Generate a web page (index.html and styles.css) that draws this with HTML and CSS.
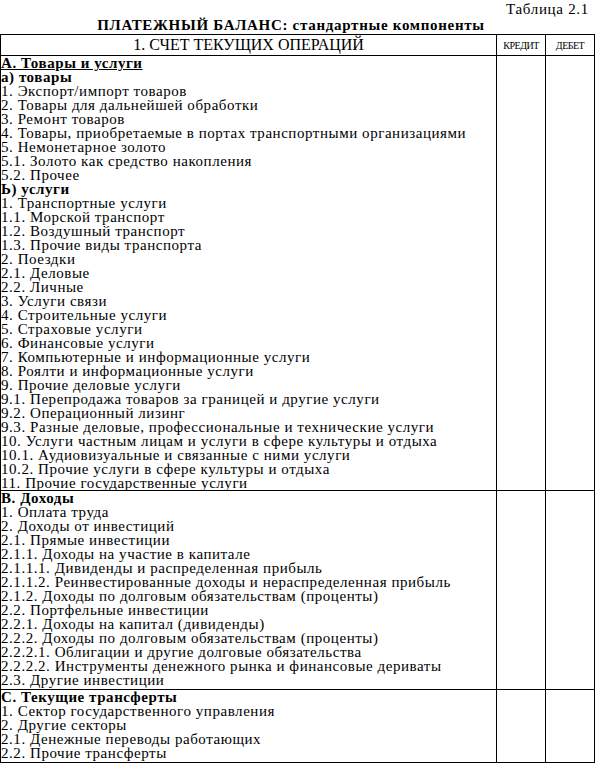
FILE: index.html
```html
<!DOCTYPE html>
<html lang="ru">
<head>
    <meta charset="UTF-8">
    <title>Платежный баланс</title>
    <link rel="stylesheet" href="styles.css">
</head>
<body>
    <div class="caption">Таблица 2.1</div>
    <h1 class="title">ПЛАТЕЖНЫЙ БАЛАНС: стандартные компоненты</h1>
    <table class="balance">
        <tr class="head">
            <th class="name">1. СЧЕТ ТЕКУЩИХ ОПЕРАЦИЙ</th>
            <th class="col">КРЕДИТ</th>
            <th class="col">ДЕБЕТ</th>
        </tr>
        <tr class="sect sect-a">
            <td class="items">
                <div class="bold under">А. Товары и услуги</div>
                <div class="bold">а) товары</div>
                <div>1. Экспорт/импорт товаров</div>
                <div>2. Товары для дальнейшей обработки</div>
                <div>3. Ремонт товаров</div>
                <div>4. Товары, приобретаемые в портах транспортными организациями</div>
                <div>5. Немонетарное золото</div>
                <div>5.1. Золото как средство накопления</div>
                <div>5.2. Прочее</div>
                <div class="bold">Ь) услуги</div>
                <div>1. Транспортные услуги</div>
                <div>1.1. Морской транспорт</div>
                <div>1.2. Воздушный транспорт</div>
                <div>1.3. Прочие виды транспорта</div>
                <div>2. Поездки</div>
                <div>2.1. Деловые</div>
                <div>2.2. Личные</div>
                <div>3. Услуги связи</div>
                <div>4. Строительные услуги</div>
                <div>5. Страховые услуги</div>
                <div>6. Финансовые услуги</div>
                <div>7. Компьютерные и информационные услуги</div>
                <div>8. Роялти и информационные услуги</div>
                <div>9. Прочие деловые услуги</div>
                <div>9.1. Перепродажа товаров за границей и другие услуги</div>
                <div>9.2. Операционный лизинг</div>
                <div>9.3. Разные деловые, профессиональные и технические услуги</div>
                <div>10. Услуги частным лицам и услуги в сфере культуры и отдыха</div>
                <div>10.1. Аудиовизуальные и связанные с ними услуги</div>
                <div>10.2. Прочие услуги в сфере культуры и отдыха</div>
                <div>11. Прочие государственные услуги</div>
            </td>
            <td></td>
            <td></td>
        </tr>
        <tr class="sect sect-b">
            <td class="items">
                <div class="bold">В. Доходы</div>
                <div>1. Оплата труда</div>
                <div>2. Доходы от инвестиций</div>
                <div>2.1. Прямые инвестиции</div>
                <div>2.1.1. Доходы на участие в капитале</div>
                <div>2.1.1.1. Дивиденды и распределенная прибыль</div>
                <div>2.1.1.2. Реинвестированные доходы и нераспределенная прибыль</div>
                <div>2.1.2. Доходы по долговым обязательствам (проценты)</div>
                <div>2.2. Портфельные инвестиции</div>
                <div>2.2.1. Доходы на капитал (дивиденды)</div>
                <div>2.2.2. Доходы по долговым обязательствам (проценты)</div>
                <div>2.2.2.1. Облигации и другие долговые обязательства</div>
                <div>2.2.2.2. Инструменты денежного рынка и финансовые дериваты</div>
                <div>2.3. Другие инвестиции</div>
            </td>
            <td></td>
            <td></td>
        </tr>
        <tr class="sect sect-c">
            <td class="items">
                <div class="bold">С. Текущие трансферты</div>
                <div>1. Сектор государственного управления</div>
                <div>2. Другие секторы</div>
                <div>2.1. Денежные переводы работающих</div>
                <div>2.2. Прочие трансферты</div>
            </td>
            <td></td>
            <td></td>
        </tr>
    </table>
</body>
</html>
```

FILE: styles.css
```css
body {
    margin: 0;
    font-family: "Liberation Serif", "Times New Roman", serif;
    color: #000;
    background: #fff;
    width: 596px;
}

.caption {
    text-align: right;
    font-size: 15px;
    line-height: 16px;
    letter-spacing: 0.7px;
    padding: 1px 7px 0 0;
}

.title {
    margin: 0;
    font-size: 15px;
    line-height: 16px;
    letter-spacing: 0.7px;
    text-align: center;
    padding-right: 14px;
}

.balance {
    border-collapse: collapse;
    width: 595px;
    margin-top: 1px;
}

.balance th,
.balance td {
    border: 1px solid #000;
    padding: 0;
    vertical-align: top;
}

.head th {
    font-weight: normal;
    height: 20px;
    vertical-align: middle;
}

.head .name {
    font-size: 16px;
    width: 496px;
}

.head .col {
    font-size: 10px;
    letter-spacing: -0.5px;
    width: 48px;
}

.items {
    font-size: 15px;
    line-height: 14px;
    letter-spacing: 0.55px;
    padding: 1px 0 0 2px;
}

.sect-b .items,
.sect-c .items {
    padding-bottom: 2px;
}

.bold {
    font-weight: bold;
}

.under {
    text-decoration: underline;
}
```
